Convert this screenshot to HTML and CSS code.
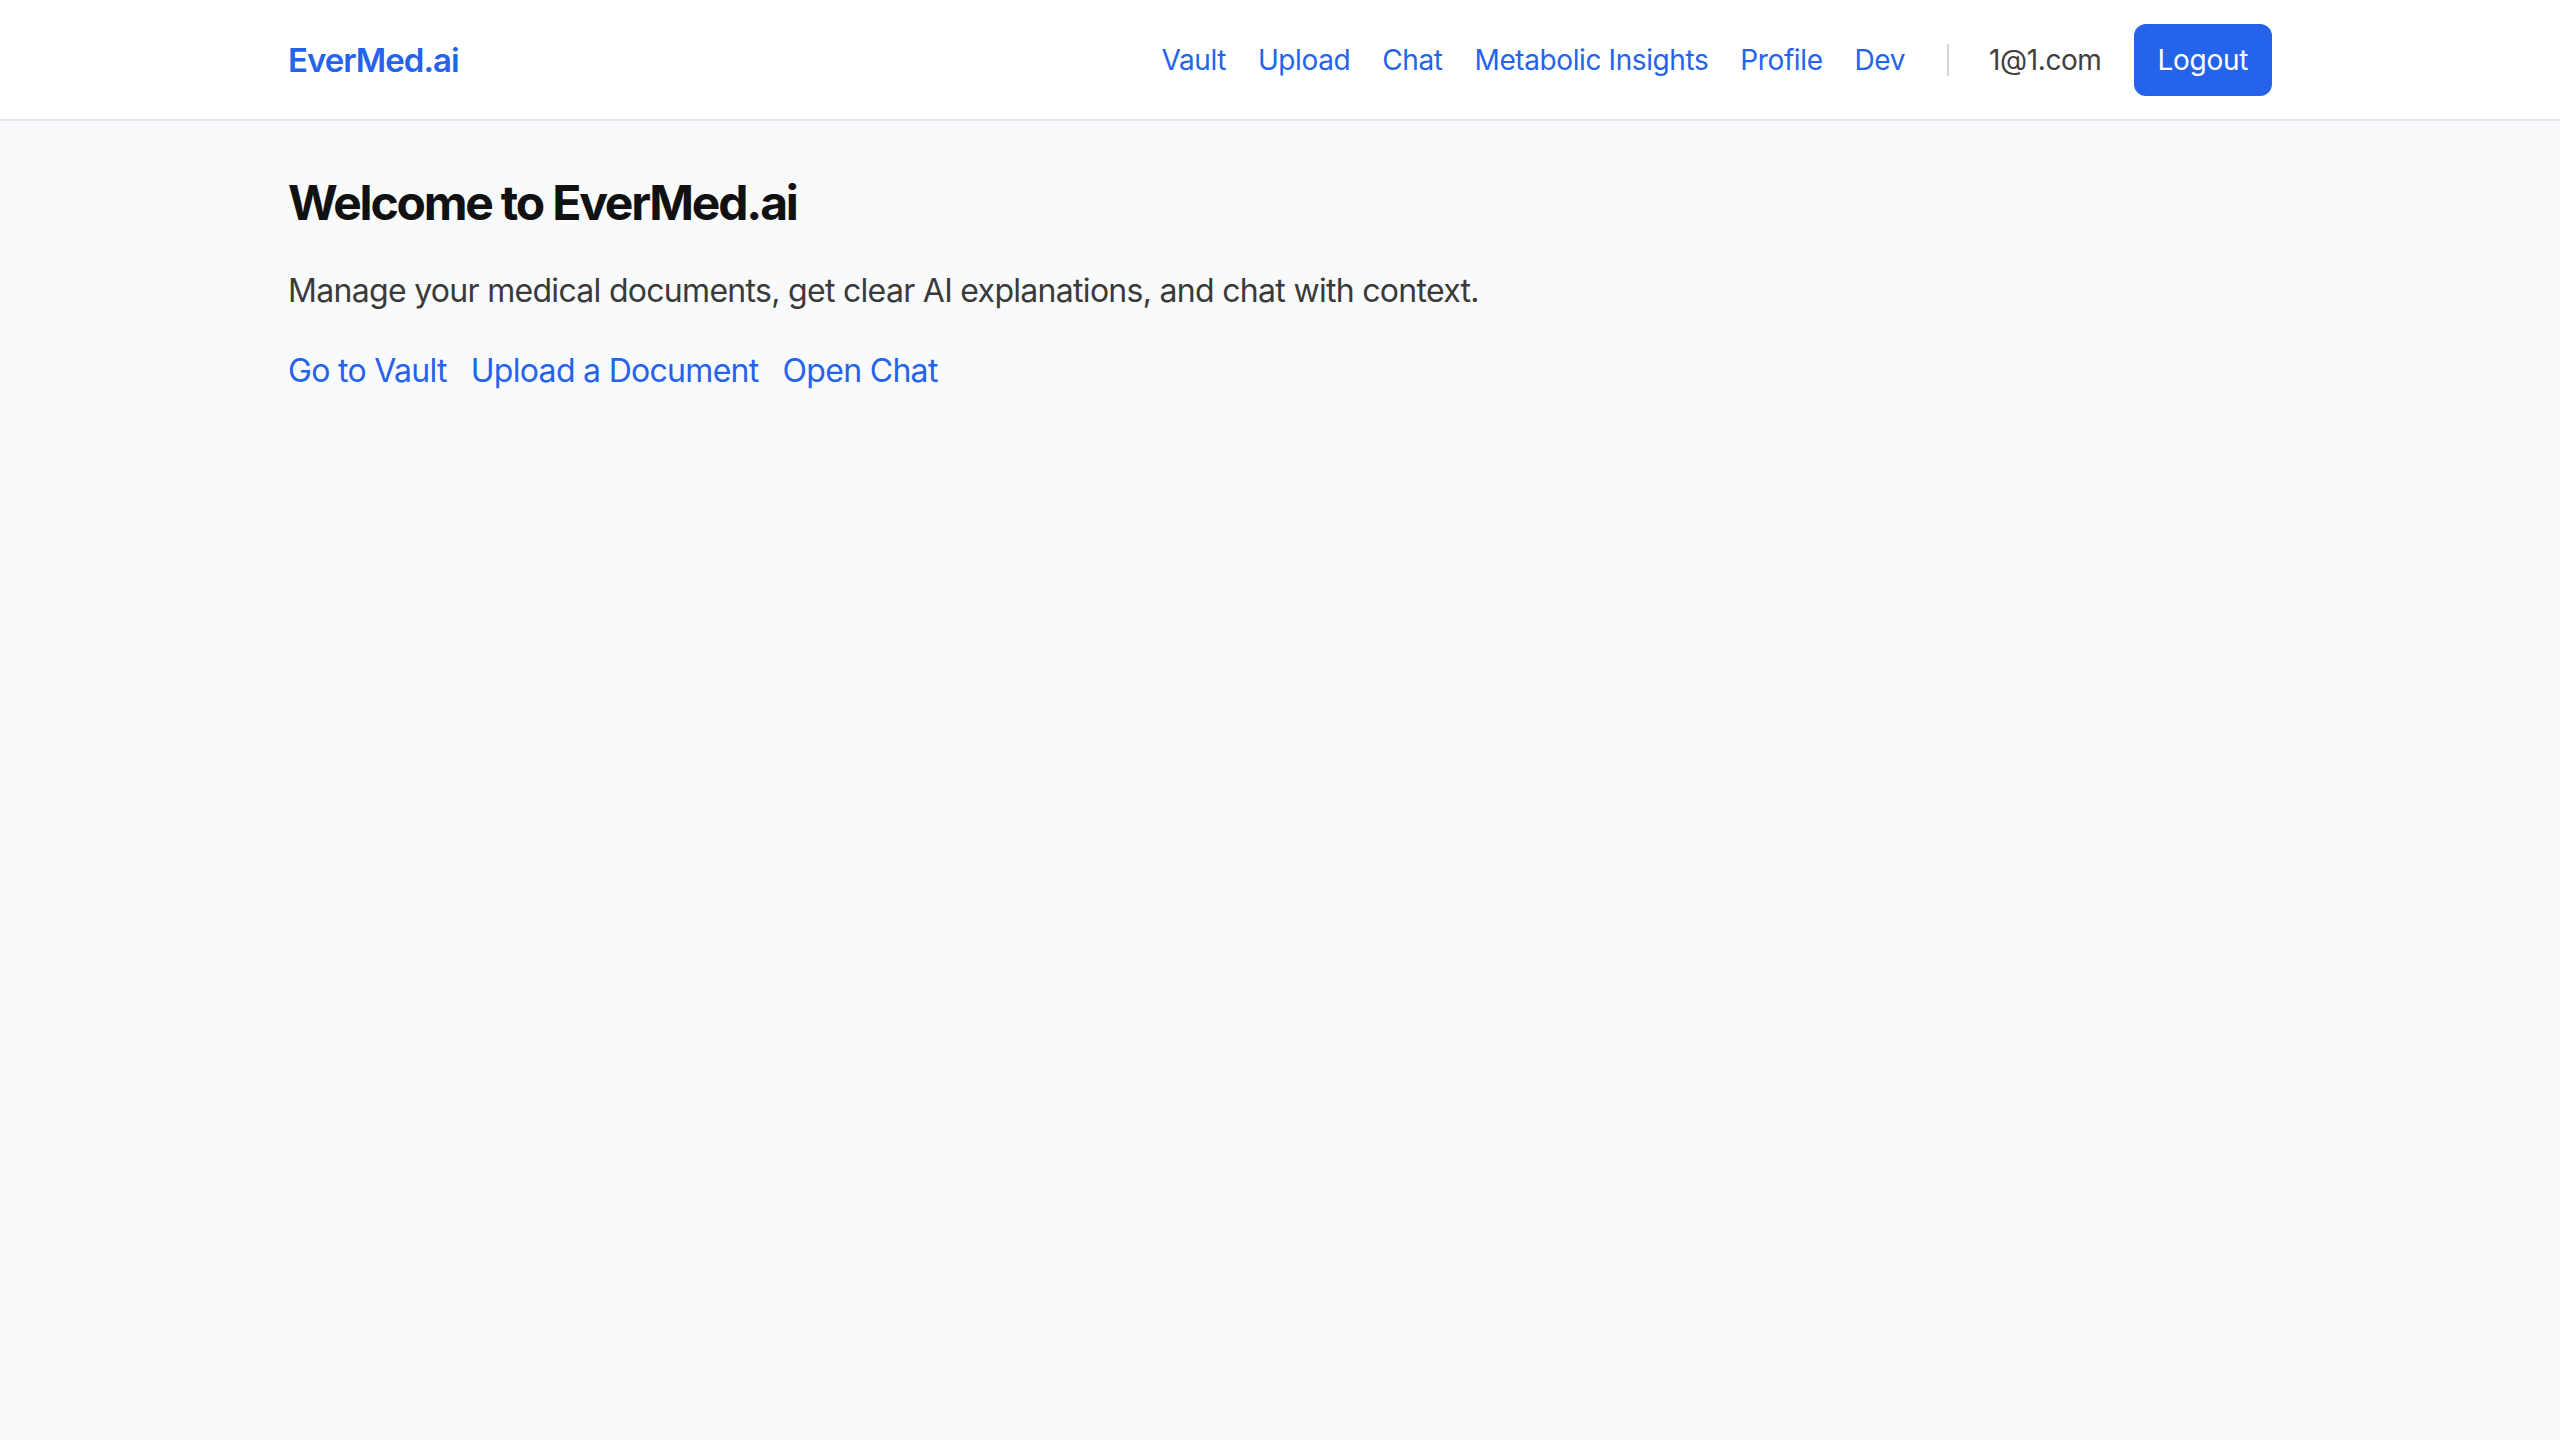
FILE: index.html
```html
<!DOCTYPE html>
<html lang="en">
<head>
<meta charset="utf-8">
<title>EverMed.ai</title>
<link rel="stylesheet" href="styles.css">
</head>
<body>
<header class="topbar">
  <div class="container bar">
    <a class="logo" href="#">EverMed.ai</a>
    <nav class="nav">
      <a href="#">Vault</a>
      <a href="#">Upload</a>
      <a href="#">Chat</a>
      <a href="#">Metabolic Insights</a>
      <a href="#">Profile</a>
      <a href="#">Dev</a>
      <span class="divider"></span>
      <span class="email">1@1.com</span>
      <button class="logout">Logout</button>
    </nav>
  </div>
</header>
<main class="container main">
  <h1 class="title">Welcome to EverMed.ai</h1>
  <p class="lead">Manage your medical documents, get clear AI explanations, and chat with context.</p>
  <div class="links">
    <a href="#">Go to Vault</a>
    <a href="#">Upload a Document</a>
    <a href="#">Open Chat</a>
  </div>
</main>
</body>
</html>
```

FILE: styles.css
```css
* { box-sizing: border-box; }
html, body { margin: 0; padding: 0; }
body {
  background: #f9fafb;
  font-family: Inter, "Noto Sans", "Liberation Sans", sans-serif;
  color: #111827;
  min-height: 1440px;
}
a { text-decoration: none; color: #2563eb; }
.container {
  max-width: 2048px;
  margin: 0 auto;
  padding: 0 32px;
}
.topbar {
  background: #ffffff;
  border-bottom: 2px solid #e5e7eb;
}
.bar {
  height: 119px;
  display: flex;
  align-items: center;
  justify-content: space-between;
}
.logo {
  font-size: 33px;
  font-weight: 600;
  letter-spacing: -1px;
  color: #2563eb;
}
.nav {
  display: flex;
  align-items: center;
  gap: 32px;
  font-size: 28px;
  letter-spacing: -0.4px;
}
.nav a { color: #2563eb; }
.divider {
  width: 2px;
  height: 32px;
  background: #d1d5db;
  margin: 0 8px 0 10px;
}
.email { color: #404040; }
.logout {
  font-family: inherit;
  font-size: 28px;
  line-height: 40px;
  letter-spacing: -0.3px;
  padding: 16px 24px;
  background: #2563eb;
  color: #ffffff;
  border: none;
  border-radius: 12px;
}
.main { padding-top: 50px; }
.title {
  margin: 0;
  font-size: 48px;
  line-height: 64px;
  font-weight: 700;
  letter-spacing: -2.2px;
  color: #111111;
}
.lead {
  margin: 32px 0 0;
  font-size: 32px;
  line-height: 48px;
  letter-spacing: -0.7px;
  color: #3a3a3a;
}
.links {
  margin-top: 32px;
  display: flex;
  gap: 24px;
  font-size: 32px;
  line-height: 48px;
  letter-spacing: -0.7px;
}
```
